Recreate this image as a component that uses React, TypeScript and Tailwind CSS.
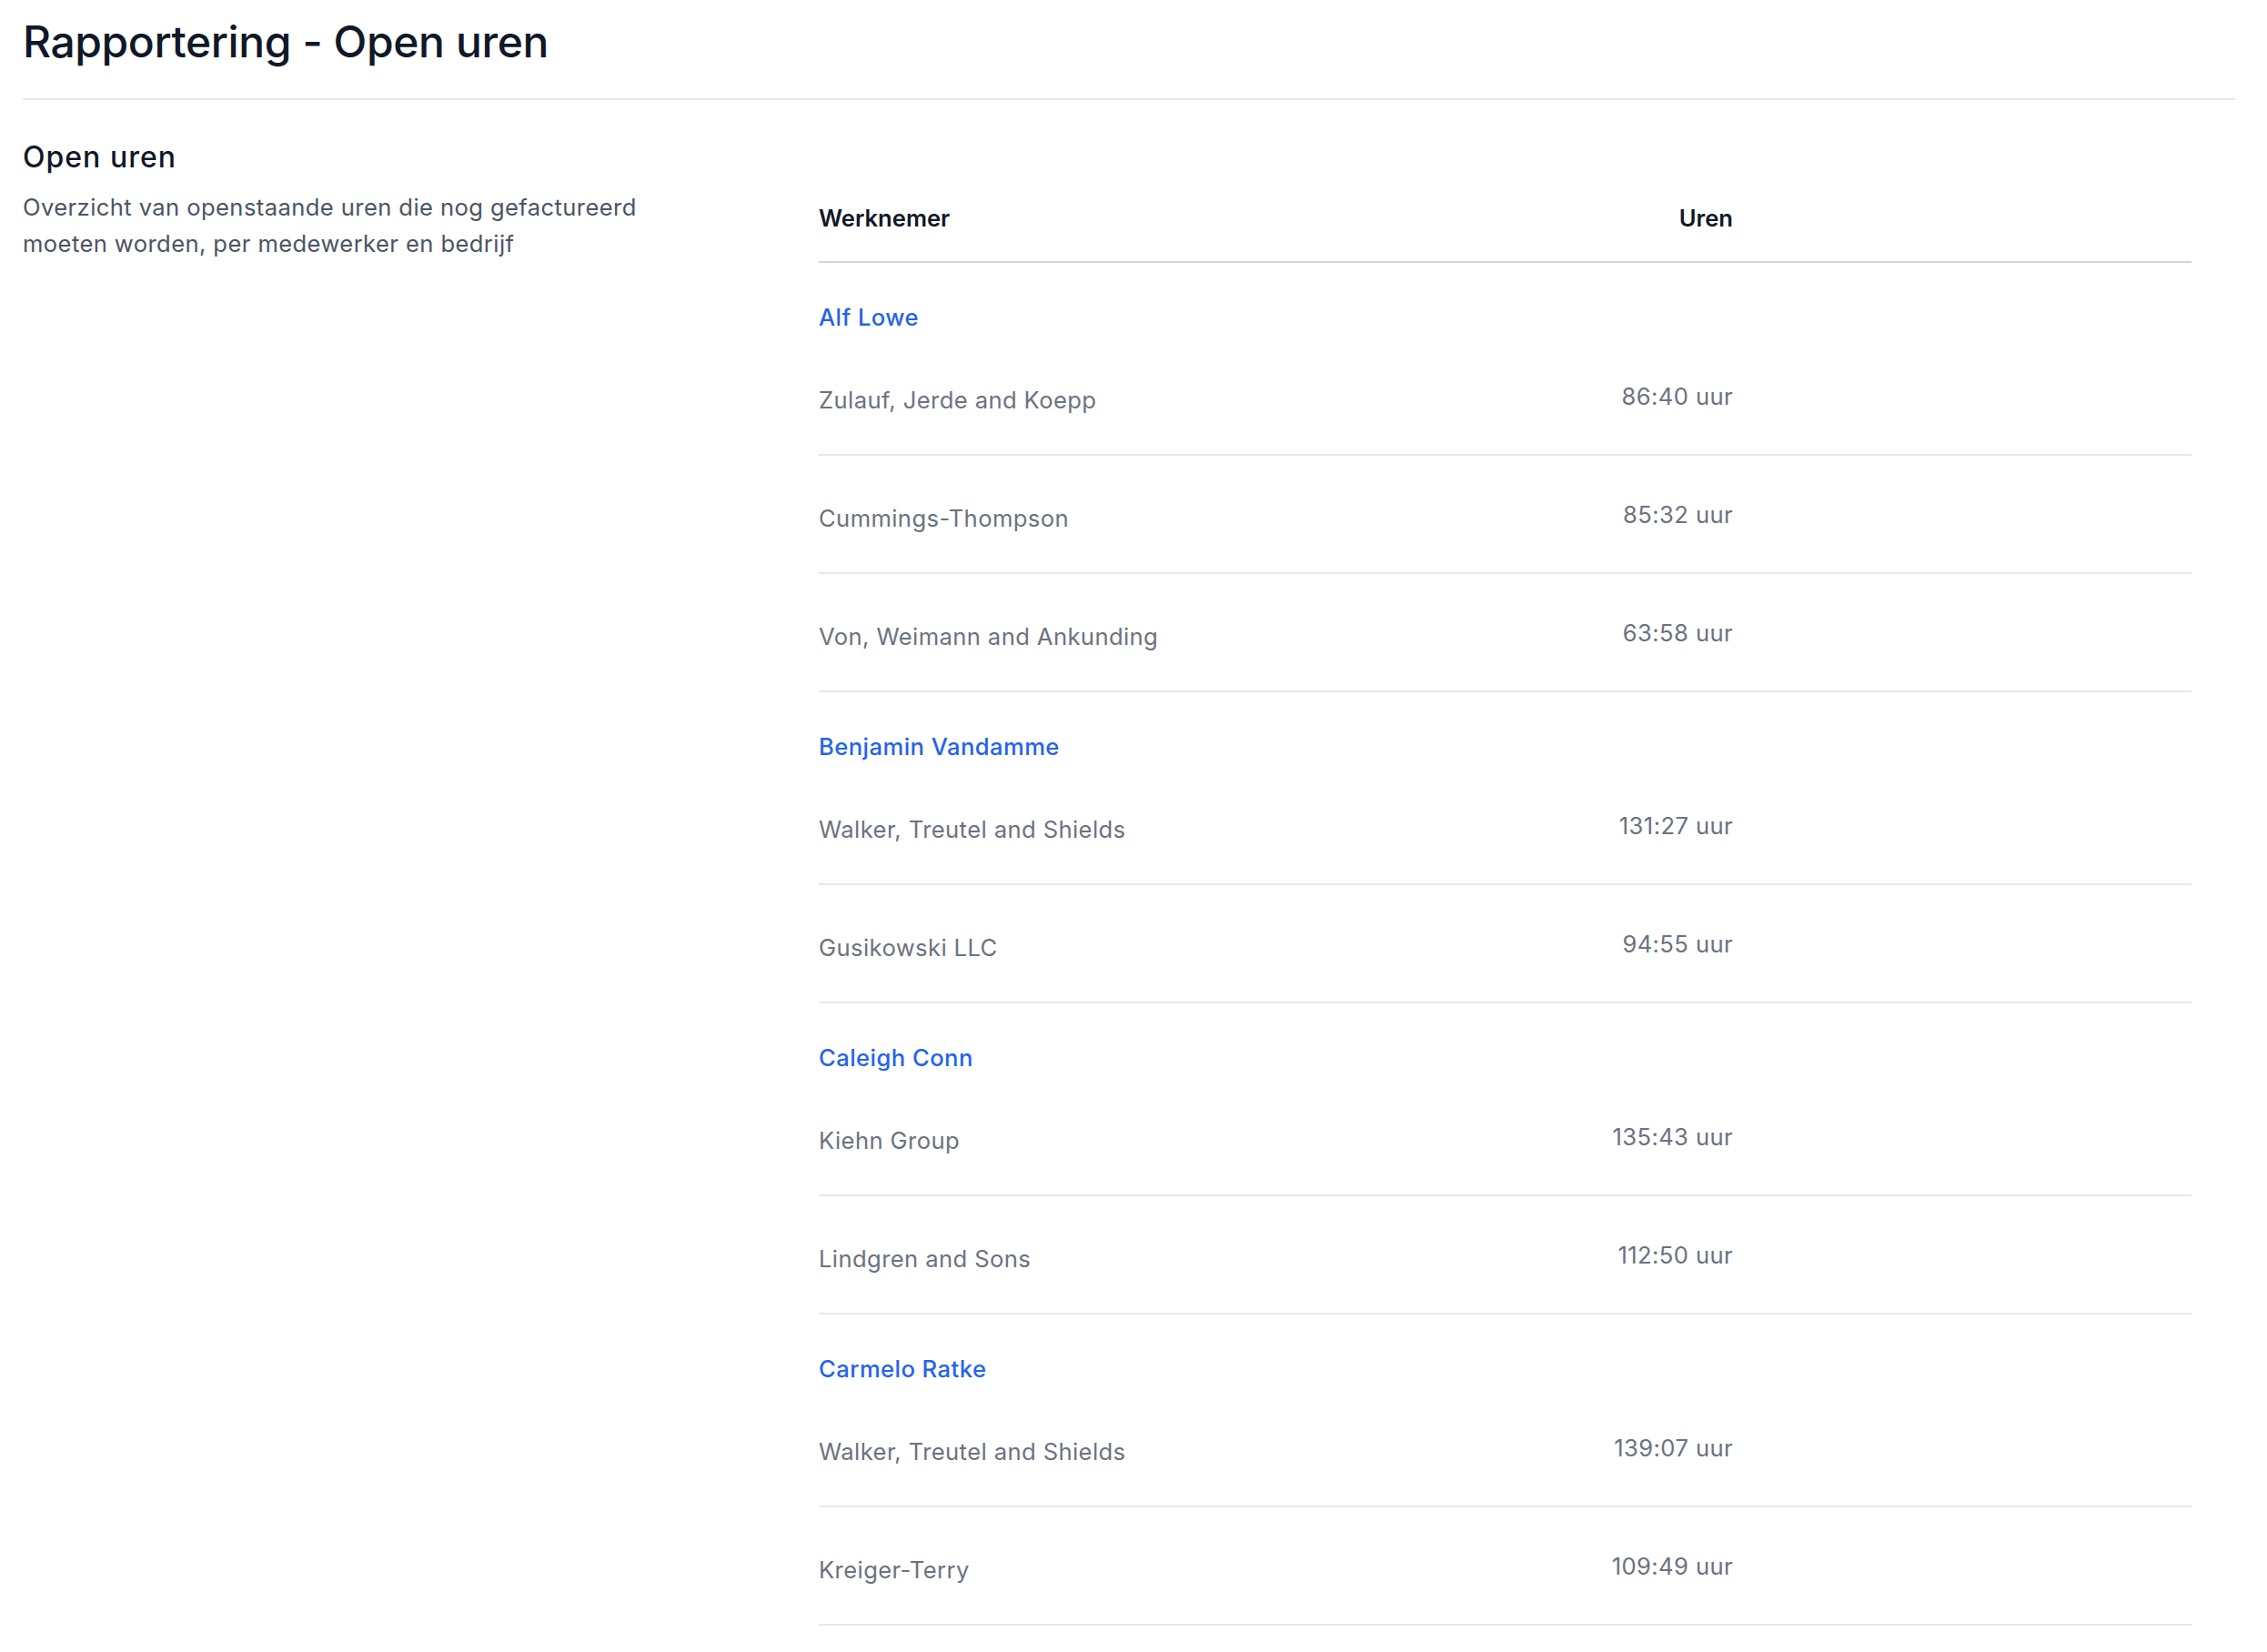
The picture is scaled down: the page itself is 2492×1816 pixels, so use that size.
import React from "react";

type Entry = { company: string; hours: string };
type Group = { name: string; entries: Entry[] };

const groups: Group[] = [
  {
    name: "Alf Lowe",
    entries: [
      { company: "Zulauf, Jerde and Koepp", hours: "86:40 uur" },
      { company: "Cummings-Thompson", hours: "85:32 uur" },
      { company: "Von, Weimann and Ankunding", hours: "63:58 uur" },
    ],
  },
  {
    name: "Benjamin Vandamme",
    entries: [
      { company: "Walker, Treutel and Shields", hours: "131:27 uur" },
      { company: "Gusikowski LLC", hours: "94:55 uur" },
    ],
  },
  {
    name: "Caleigh Conn",
    entries: [
      { company: "Kiehn Group", hours: "135:43 uur" },
      { company: "Lindgren and Sons", hours: "112:50 uur" },
    ],
  },
  {
    name: "Carmelo Ratke",
    entries: [
      { company: "Walker, Treutel and Shields", hours: "139:07 uur" },
      { company: "Kreiger-Terry", hours: "109:49 uur" },
    ],
  },
];

function CompanyRow({ entry }: { entry: Entry }) {
  return (
    <div className="grid h-[130px] grid-cols-[805px_200px_1fr] border-b-2 border-[#e5e7eb]">
      <div className="pt-[50px] text-[25.6px] leading-[38px] tracking-[0.4px] text-[#6b7280]">{entry.company}</div>
      <div className="pt-[46px] text-right text-[25.6px] leading-[38px] tracking-[0.4px] text-[#6b7280]">{entry.hours}</div>
      <div />
    </div>
  );
}

export default function App() {
  return (
    <div
      className="min-h-screen bg-white pl-[25px] pr-[35px]"
      style={{ fontFamily: "Inter, 'Noto Sans', 'Liberation Sans', sans-serif" }}
    >
      <div className="border-b-2 border-[#e5e7eb] pt-[17px] pb-[33px]">
        <h1 className="text-[48px] font-medium leading-[58px] tracking-[-0.4px] text-[#111827]">
          Rapportering - Open uren
        </h1>
      </div>

      <div className="flex">
        <div className="w-[875px] shrink-0 pt-[40px]">
          <h2 className="text-[32px] font-medium leading-[45px] tracking-[1px] text-[#111827]">Open uren</h2>
          <p className="mt-[13px] max-w-[720px] text-[25.6px] leading-[40px] tracking-[0.4px] text-[#4b5563]">
            Overzicht van openstaande uren die nog gefactureerd moeten worden, per medewerker en bedrijf
          </p>
        </div>

        <div className="w-[1509px] shrink-0 pt-[111px]">
          <div className="grid h-[68px] grid-cols-[805px_200px_1fr] border-b-2 border-[#d1d5db]">
            <div className="text-[25.6px] font-semibold leading-[38px] text-[#111827]">Werknemer</div>
            <div className="text-right text-[25.6px] font-semibold leading-[38px] text-[#111827]">Uren</div>
            <div />
          </div>

          {groups.map((g) => (
            <div key={g.name}>
              <div className="h-[82px] pt-[41px]">
                <span className="text-[25.6px] font-medium leading-[38px] tracking-[0.45px] text-[#2563eb]">{g.name}</span>
              </div>
              {g.entries.map((e, i) => (
                <CompanyRow key={g.name + i} entry={e} />
              ))}
            </div>
          ))}
        </div>
      </div>
    </div>
  );
}
